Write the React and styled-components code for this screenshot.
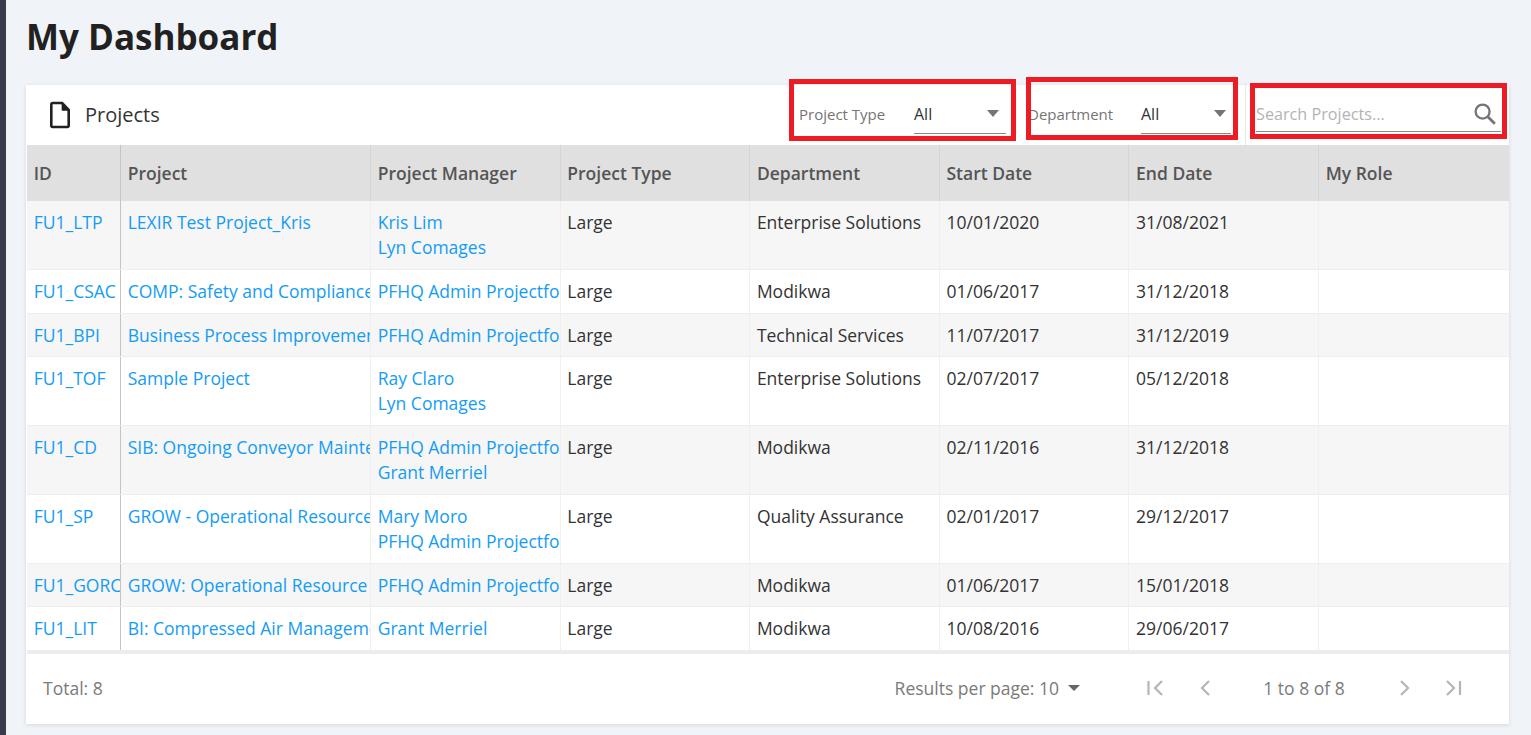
import React from 'react'
import styled, { createGlobalStyle } from 'styled-components'

const GlobalStyle = createGlobalStyle`
  * {
    box-sizing: border-box;
  }
  html, body {
    margin: 0;
    padding: 0;
    height: 100%;
    overflow: hidden;
  }
  body {
    font-family: 'Open Sans', 'Liberation Sans', sans-serif;
    background: #f0f3f7;
    color: #212121;
  }
`

const COLUMNS = '94px 250px 189.6px 189.6px 189.6px 189.6px 189.6px 1fr'
const HEADERS = ['ID', 'Project', 'Project Manager', 'Project Type', 'Department', 'Start Date', 'End Date', 'My Role']

const PROJECTS = [
  { id: 'FU1_LTP', name: 'LEXIR Test Project_Kris', managers: ['Kris Lim', 'Lyn Comages'], dept: 'Enterprise Solutions', start: '10/01/2020', end: '31/08/2021' },
  { id: 'FU1_CSAC', name: 'COMP: Safety and Compliance', managers: ['PFHQ Admin Projectforce'], dept: 'Modikwa', start: '01/06/2017', end: '31/12/2018' },
  { id: 'FU1_BPI', name: 'Business Process Improvement', managers: ['PFHQ Admin Projectforce'], dept: 'Technical Services', start: '11/07/2017', end: '31/12/2019' },
  { id: 'FU1_TOF', name: 'Sample Project', managers: ['Ray Claro', 'Lyn Comages'], dept: 'Enterprise Solutions', start: '02/07/2017', end: '05/12/2018' },
  { id: 'FU1_CD', name: 'SIB: Ongoing Conveyor Maintenance', managers: ['PFHQ Admin Projectforce', 'Grant Merriel'], dept: 'Modikwa', start: '02/11/2016', end: '31/12/2018' },
  { id: 'FU1_SP', name: 'GROW - Operational Resource', managers: ['Mary Moro', 'PFHQ Admin Projectforce'], dept: 'Quality Assurance', start: '02/01/2017', end: '29/12/2017' },
  { id: 'FU1_GORC', name: 'GROW: Operational Resource Centre', managers: ['PFHQ Admin Projectforce'], dept: 'Modikwa', start: '01/06/2017', end: '15/01/2018' },
  { id: 'FU1_LIT', name: 'BI: Compressed Air Management', managers: ['Grant Merriel'], dept: 'Modikwa', start: '10/08/2016', end: '29/06/2017' },
]

function App() {
  return (
    <Page>
      <GlobalStyle />
      <SideRail />
      <Content>
        <Title>My Dashboard</Title>
        <Card>
          <Toolbar>
            <CardTitle>
              <svg width="22" height="28" viewBox="0 0 22 28" fill="none" stroke="#212121" strokeWidth="2.6" strokeLinejoin="round">
                <path d="M2.3 3.4c0-.8.6-1.4 1.400-1.400h9.300l6.700 7v15.600c0 .8-.6 1.400-1.400 1.400H3.700c-.8 0-1.400-.6-1.400-1.400z" />
                <path d="M13.400 3v6h5.800z" fill="#212121" strokeWidth="1.500" />
              </svg>
              <CardTitleText>Projects</CardTitleText>
            </CardTitle>
            <Filter $labelWidth={115} $width={92} $ml={0}>
              <RedBox $top={-6} $left={-10} $right={-10} $bottom={-7} />
              <FilterLabel>Project Type</FilterLabel>
              <SelectBox $gap={7}>
                All
                <Caret />
              </SelectBox>
            </Filter>
            <Filter $labelWidth={113} $width={90} $ml={22}>
              <RedBox $top={-8} $left={-2} $right={-7} $bottom={-6} />
              <FilterLabel>Department</FilterLabel>
              <SelectBox $gap={5}>
                All
                <Caret />
              </SelectBox>
            </Filter>
            <Divider />
            <SearchBox>
              <RedBox $top={-2} $left={-6} $right={-6} $bottom={-8} />
              <SearchPlaceholder>Search Projects...</SearchPlaceholder>
              <svg width="24" height="24" viewBox="0 0 24 24" fill="none" stroke="#757575" strokeWidth="2.3">
                <circle cx="9.600" cy="9.600" r="7" />
                <path d="M14.800 14.800l7 7" strokeWidth="2.800" />
              </svg>
            </SearchBox>
          </Toolbar>

          <HeaderRow>
            {HEADERS.map((h, i) => (
              <HeaderCell key={h} $pinned={i === 0}>{h}</HeaderCell>
            ))}
          </HeaderRow>

          {PROJECTS.map((p, i) => (
            <Row key={p.id} $odd={i % 2 === 0} $tall={p.managers.length > 1}>
              <Cell $pinned><LinkText>{p.id}</LinkText></Cell>
              <Cell><LinkText>{p.name}</LinkText></Cell>
              <Cell>
                {p.managers.map((m) => (
                  <LinkText key={m}>{m}</LinkText>
                ))}
              </Cell>
              <Cell>Large</Cell>
              <Cell>{p.dept}</Cell>
              <Cell>{p.start}</Cell>
              <Cell>{p.end}</Cell>
              <Cell />
            </Row>
          ))}

          <Footer>
            <Total>Total: 8</Total>
            <PageSize>
              Results per page: 10
              <SmallCaret />
            </PageSize>
            <Pager>
              <PagerIcon aria-label="first">
                <path d="M2.500 5v14M16 5l-7 7 7 7" />
              </PagerIcon>
              <PagerIcon aria-label="previous" $ml={24}>
                <path d="M15 5l-7 7 7 7" />
              </PagerIcon>
              <PageCount>1 to 8 of 8</PageCount>
              <PagerIcon aria-label="next">
                <path d="M8 5l7 7-7 7" />
              </PagerIcon>
              <PagerIcon aria-label="last" $ml={26}>
                <path d="M4 5l7 7-7 7M17 5v14" />
              </PagerIcon>
            </Pager>
          </Footer>
        </Card>
      </Content>
    </Page>
  )
}

const Page = styled.div`
  display: flex;
  height: 735px;
  overflow: hidden;
`

const SideRail = styled.div`
  width: 6px;
  flex: none;
  background: #3a3c4c;
`

const Content = styled.main`
  flex: 1;
  padding: 13px 22px 0 20px;
`

const Title = styled.h1`
  margin: 0 0 22px 0;
  height: 50px;
  font-size: 35px;
  line-height: 48px;
  font-weight: 700;
  color: #212121;
`

const Card = styled.section`
  width: 1483px;
  background: #fff;
  border-left: 1px solid #fff;
  box-shadow: 0 1px 4px rgba(0, 0, 0, 0.12);
`

const Toolbar = styled.header`
  display: flex;
  align-items: flex-start;
  height: 60px;
`

const CardTitle = styled.div`
  display: flex;
  align-items: center;
  gap: 14px;
  height: 60px;
  margin-left: 22px;
  margin-right: auto;
  font-size: 20px;
  color: #333;
`

const CardTitleText = styled.span`
  margin-bottom: 2px;
`

const Filter = styled.div`
  position: relative;
  display: grid;
  grid-template-columns: ${(p) => p.$labelWidth}px ${(p) => p.$width}px;
  align-items: center;
  height: 49px;
  margin-left: ${(p) => p.$ml}px;
`

const FilterLabel = styled.span`
  padding-top: 9px;
  font-size: 15px;
  color: #757575;
`

const SelectBox = styled.div`
  display: flex;
  align-items: center;
  justify-content: space-between;
  height: 49px;
  padding: 9px ${(p) => p.$gap}px 0 0;
  border-bottom: 1px solid #8a8a8a;
  font-size: 16px;
  color: #333;
`

const Caret = styled.span`
  width: 0;
  height: 0;
  border-left: 6.500px solid transparent;
  border-right: 6.500px solid transparent;
  border-top: 7px solid #757575;
`

const SmallCaret = styled.span`
  width: 0;
  height: 0;
  margin-left: 9px;
  border-left: 6.500px solid transparent;
  border-right: 6.500px solid transparent;
  border-top: 6.500px solid #666;
`

const RedBox = styled.span`
  position: absolute;
  top: ${(p) => p.$top}px;
  left: ${(p) => p.$left}px;
  right: ${(p) => p.$right}px;
  bottom: ${(p) => p.$bottom}px;
  border: 5px solid #ed1c24;
  pointer-events: none;
`

const Divider = styled.span`
  width: 1px;
  height: 60px;
  margin: 0 10px 0 14px;
  background: #e6e6e6;
`

const SearchBox = styled.div`
  position: relative;
  display: flex;
  align-items: center;
  justify-content: space-between;
  width: 245px;
  height: 47px;
  margin-right: 8px;
  padding: 11px 4px 0 0;
  border-bottom: 1px solid #8a8a8a;
`

const SearchPlaceholder = styled.span`
  font-size: 16.200px;
  color: #b3b3b3;
`

const HeaderRow = styled.div`
  display: grid;
  grid-template-columns: ${COLUMNS};
  height: 56px;
  background: #e0e0e0;
`

const HeaderCell = styled.div`
  display: flex;
  align-items: center;
  padding-left: 6.700px;
  font-size: 17.500px;
  font-weight: 600;
  color: #555;
  border-right: 1px solid ${(p) => (p.$pinned ? '#c4c4c4' : '#d4d4d4')};

  &:last-child {
    border-right: 0;
  }
`

const Row = styled.div`
  display: grid;
  grid-template-columns: ${COLUMNS};
  height: ${(p) => (p.$tall ? 68.8 : 43.75)}px;
  background: ${(p) => (p.$odd ? '#f6f6f6' : '#fff')};
  border-bottom: 1px solid #eeeeee;
`

const Cell = styled.div`
  padding: 9px 0 0 6.700px;
  overflow: hidden;
  white-space: nowrap;
  font-size: 17.500px;
  line-height: 25px;
  color: #333;
  border-right: 1px solid ${(p) => (p.$pinned ? '#c4c4c4' : '#f0f0f0')};

  &:last-child {
    border-right: 0;
  }
`

const LinkText = styled.a`
  display: block;
  color: #149cf5;
`

const Footer = styled.footer`
  display: flex;
  align-items: center;
  height: 73px;
  padding-bottom: 2px;
  border-top: 3px solid #ececec;
  font-size: 17.500px;
  color: #7a7a7a;
`

const Total = styled.span`
  margin-left: 16px;
  margin-right: auto;
`

const PageSize = styled.div`
  display: flex;
  align-items: center;
`

const Pager = styled.div`
  display: flex;
  align-items: center;
  margin-left: 66px;
  margin-right: 42px;
`

const PagerIcon = styled.svg.attrs({
  width: 24,
  height: 24,
  viewBox: '0 0 24 24',
  fill: 'none',
  stroke: '#b5b5b5',
  strokeWidth: 2.2,
})`
  margin-left: ${(p) => p.$ml || 0}px;
`

const PageCount = styled.span`
  width: 175px;
  padding-right: 3px;
  text-align: center;
  color: #7a7a7a;
`

export default App
